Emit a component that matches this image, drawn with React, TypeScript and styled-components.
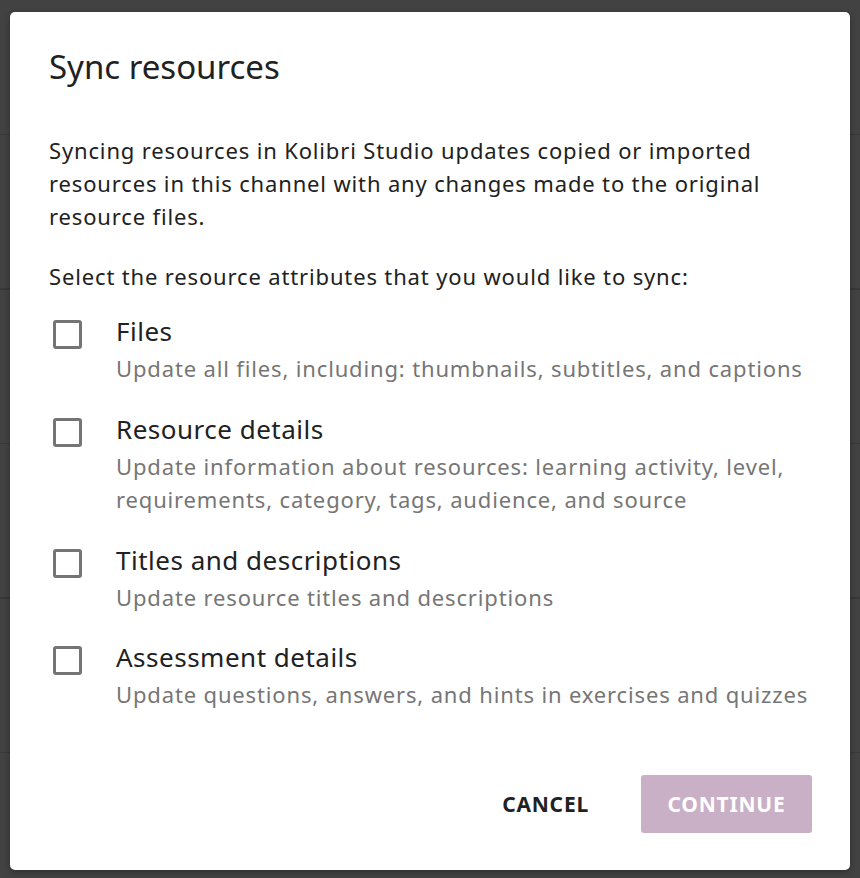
import styled, { createGlobalStyle } from "styled-components"

const GlobalStyle = createGlobalStyle`
  html, body {
    margin: 0;
    padding: 0;
  }
  body {
    font-family: "Noto Sans", "Open Sans", sans-serif;
    background-color: #424242;
    background-image: repeating-linear-gradient(
      to bottom,
      transparent 0px,
      transparent 153px,
      #383838 153px,
      #383838 154.5px
    );
    background-position: 0 -19px;
  }
`

interface Attribute {
  title: string
  description: string
}

const attributes: Attribute[] = [
  {
    title: "Files",
    description: "Update all files, including: thumbnails, subtitles, and captions",
  },
  {
    title: "Resource details",
    description:
      "Update information about resources: learning activity, level, requirements, category, tags, audience, and source",
  },
  {
    title: "Titles and descriptions",
    description: "Update resource titles and descriptions",
  },
  {
    title: "Assessment details",
    description: "Update questions, answers, and hints in exercises and quizzes",
  },
]

const App = () => {
  return (
    <>
      <GlobalStyle />
      <Overlay>
        <Dialog>
          <Title>Sync resources</Title>
          <Intro>
            Syncing resources in Kolibri Studio updates copied or imported resources in this
            channel with any changes made to the original resource files.
          </Intro>
          <Prompt>Select the resource attributes that you would like to sync:</Prompt>
          <List>
            {attributes.map((a) => (
              <Item key={a.title}>
                <Box type="checkbox" />
                <ItemText>
                  <ItemTitle>{a.title}</ItemTitle>
                  <ItemDesc>{a.description}</ItemDesc>
                </ItemText>
              </Item>
            ))}
          </List>
          <Actions>
            <FlatButton>Cancel</FlatButton>
            <RaisedButton disabled>Continue</RaisedButton>
          </Actions>
        </Dialog>
      </Overlay>
    </>
  )
}

export default App

const Overlay = styled.div`
  min-height: 878px;
  box-sizing: border-box;
  padding: 12px 10px 8px 10px;
  display: flex;
`

const Dialog = styled.div`
  flex: 1;
  background: #fff;
  border-radius: 5px;
  box-shadow: 0 2px 6px rgba(0, 0, 0, 0.3);
  padding: 35px 38px 37px 39px;
  display: flex;
  flex-direction: column;
  color: #212121;
`

const Title = styled.h1`
  margin: 0;
  font-size: 33px;
  font-weight: 400;
  line-height: 40px;
`

const Intro = styled.p`
  margin: 47px 0 0 0;
  font-size: 22px;
  line-height: 33px;
  letter-spacing: 0.85px;
`

const Prompt = styled.p`
  margin: 27px 0 0 0;
  font-size: 22px;
  line-height: 33px;
  letter-spacing: 0.85px;
`

const List = styled.div`
  display: flex;
  flex-direction: column;
  gap: 27px;
  margin-top: 22px;
`

const Item = styled.label`
  display: flex;
  align-items: flex-start;
`

const Box = styled.input`
  appearance: none;
  margin: 5px 0 0 4px;
  width: 29px;
  height: 29px;
  box-sizing: border-box;
  border: 3px solid #757575;
  border-radius: 3px;
  background: #fff;
  flex-shrink: 0;
`

const ItemText = styled.div`
  margin-left: 34px;
  display: flex;
  flex-direction: column;
  gap: 4px;
`

const ItemTitle = styled.span`
  font-size: 26px;
  line-height: 33px;
  letter-spacing: 0.5px;
`

const ItemDesc = styled.span`
  font-size: 22px;
  line-height: 33.5px;
  color: #767676;
  letter-spacing: 0.85px;
`

const Actions = styled.div`
  margin-top: auto;
  display: flex;
  justify-content: flex-end;
  align-items: center;
  gap: 38px;
`

const FlatButton = styled.button`
  font-family: inherit;
  font-size: 21px;
  font-weight: 700;
  text-transform: uppercase;
  color: #212121;
  background: none;
  border: none;
  padding: 0 14px;
  height: 58px;
  letter-spacing: 0.8px;
`

const RaisedButton = styled.button`
  font-family: inherit;
  font-size: 21px;
  font-weight: 700;
  text-transform: uppercase;
  color: #fff;
  background: #c9b0c6;
  border: none;
  border-radius: 3px;
  width: 171px;
  height: 58px;
  letter-spacing: 0.8px;
`
